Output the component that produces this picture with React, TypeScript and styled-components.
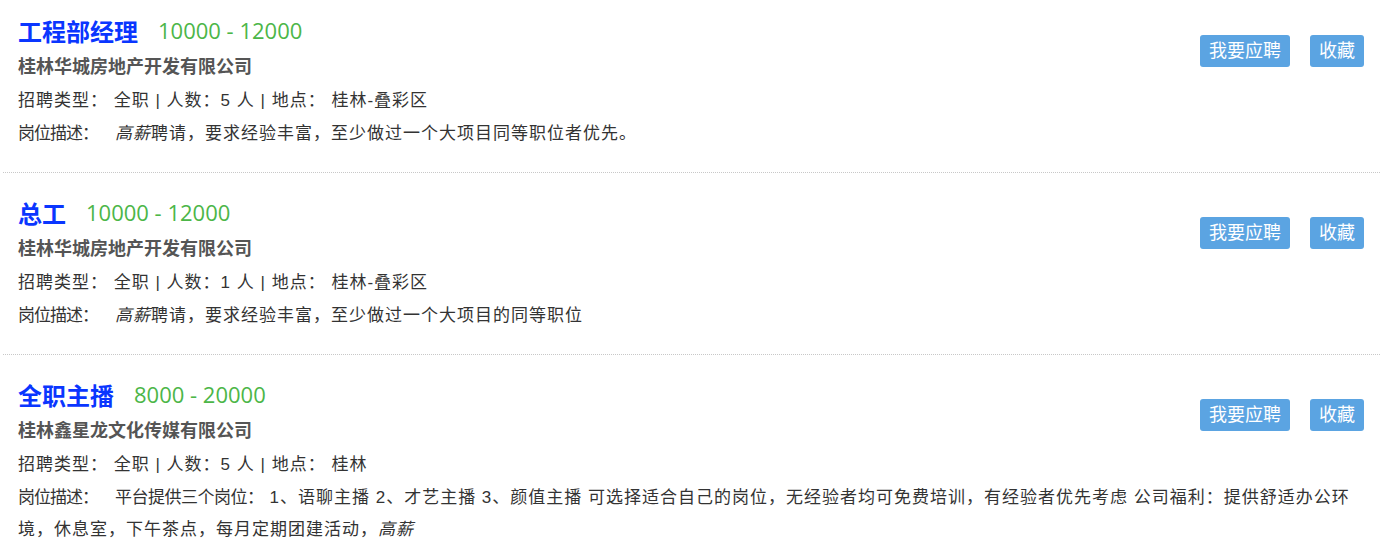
import { createGlobalStyle, styled } from "styled-components"

const GlobalStyle = createGlobalStyle`
  html, body {
    margin: 0;
    padding: 0;
    background: #fff;
  }
  body {
    font-family: "Liberation Sans", "Noto Sans CJK SC", sans-serif;
    color: #333;
  }
`

const JobList = styled.ul`
  list-style: none;
  margin: 0 0 0 3px;
  padding: 0;
`

const JobItem = styled.li`
  display: grid;
  grid-template-columns: 1fr auto;
  padding: 19px 16px 22px 15px;
  border-bottom: 1px dotted #c8c8c8;

  &:first-child {
    padding-top: 10px;
  }
`

const TitleLine = styled.div`
  display: flex;
  align-items: center;
  gap: 20px;
  height: 40px;
`

const JobTitle = styled.h3`
  margin: 0;
  font-size: 24px;
  font-weight: 700;
  color: #0a36ff;
`

const Salary = styled.span`
  font-family: "Open Sans", "Noto Sans CJK SC", sans-serif;
  font-size: 22px;
  color: #4cb648;
`

const Company = styled.div`
  margin-top: 2px;
  font-size: 18px;
  font-weight: 700;
  color: #555;
  line-height: 30px;
`

const InfoLine = styled.div`
  margin-top: 2px;
  font-size: 17px;
  line-height: 33px;
  letter-spacing: 1px;
  white-space: pre;
`

const Actions = styled.div`
  grid-column: 2;
  grid-row: 1 / span 3;
  display: flex;
  align-items: flex-start;
  gap: 20px;
  margin-top: 25px;
`

const ActionButton = styled.button`
  height: 32px;
  padding: 0 9px;
  border: none;
  border-radius: 3px;
  background: #5ba4e2;
  color: #fff;
  font-family: inherit;
  font-size: 18px;
  line-height: 32px;
  cursor: pointer;
`

const Desc = styled.div`
  grid-column: 1 / span 2;
  margin-top: 1px;
  font-size: 17px;
  line-height: 32px;
`

const DescLabel = styled.span`
  letter-spacing: -1px;
  margin-right: 17px;
`

const DescText = styled.span`
  letter-spacing: 1px;

  em {
    font-style: italic;
  }
`

const Lead = styled.span`
  letter-spacing: -0.5px;
  margin-right: 6px;
`

type Job = {
  title: string
  salary: string
  company: string
  kind: string
  count: number
  place: string
  desc: React.ReactNode
}

const jobs: Job[] = [
  {
    title: "工程部经理",
    salary: "10000 - 12000",
    company: "桂林华城房地产开发有限公司",
    kind: "全职",
    count: 5,
    place: "桂林-叠彩区",
    desc: (
      <>
        <em>高薪</em>聘请，要求经验丰富，至少做过一个大项目同等职位者优先。
      </>
    ),
  },
  {
    title: "总工",
    salary: "10000 - 12000",
    company: "桂林华城房地产开发有限公司",
    kind: "全职",
    count: 1,
    place: "桂林-叠彩区",
    desc: (
      <>
        <em>高薪</em>聘请，要求经验丰富，至少做过一个大项目的同等职位
      </>
    ),
  },
  {
    title: "全职主播",
    salary: "8000 - 20000",
    company: "桂林鑫星龙文化传媒有限公司",
    kind: "全职",
    count: 5,
    place: "桂林",
    desc: (
      <>
        <Lead>平台提供三个岗位：</Lead>
        1、语聊主播 2、才艺主播 3、颜值主播
        可选择适合自己的岗位，无经验者均可免费培训，有经验者优先考虑
        公司福利：提供舒适办公环境，休息室，下午茶点，每月定期团建活动，<em>高薪</em>
      </>
    ),
  },
]

const App = () => {
  return (
    <>
      <GlobalStyle />
      <JobList>
        {jobs.map((job, i) => (
          <JobItem key={i}>
            <TitleLine>
              <JobTitle>{job.title}</JobTitle>
              <Salary>{job.salary}</Salary>
            </TitleLine>
            <Company>{job.company}</Company>
            <InfoLine>
              招聘类型： {job.kind} | 人数：{job.count} 人 | 地点： {job.place}
            </InfoLine>
            <Actions>
              <ActionButton>我要应聘</ActionButton>
              <ActionButton>收藏</ActionButton>
            </Actions>
            <Desc>
              <DescLabel>岗位描述：</DescLabel>
              <DescText>{job.desc}</DescText>
            </Desc>
          </JobItem>
        ))}
      </JobList>
    </>
  )
}

export default App
